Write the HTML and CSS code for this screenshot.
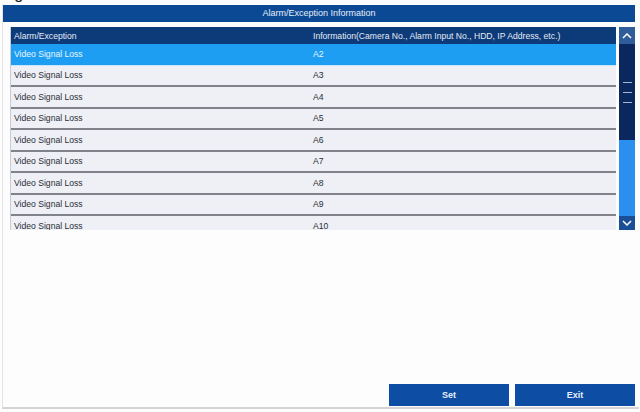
FILE: index.html
```html
<!DOCTYPE html>
<html>
<head>
<meta charset="utf-8">
<link rel="stylesheet" href="styles.css">
</head>
<body>
<div class="caption"><span>Figure</span></div>
<div class="dialog">
  <div class="titlebar">Alarm/Exception Information</div>
  <div class="table">
    <div class="list">
      <div class="row head"><div class="c1">Alarm/Exception</div><div class="c2">Information(Camera No., Alarm Input No., HDD, IP Address, etc.)</div></div>
      <div class="body">
        <div class="row sel"><div class="c1">Video Signal Loss</div><div class="c2">A2</div></div>
        <div class="row"><div class="c1">Video Signal Loss</div><div class="c2">A3</div></div>
        <div class="row"><div class="c1">Video Signal Loss</div><div class="c2">A4</div></div>
        <div class="row"><div class="c1">Video Signal Loss</div><div class="c2">A5</div></div>
        <div class="row"><div class="c1">Video Signal Loss</div><div class="c2">A6</div></div>
        <div class="row"><div class="c1">Video Signal Loss</div><div class="c2">A7</div></div>
        <div class="row"><div class="c1">Video Signal Loss</div><div class="c2">A8</div></div>
        <div class="row"><div class="c1">Video Signal Loss</div><div class="c2">A9</div></div>
        <div class="row"><div class="c1">Video Signal Loss</div><div class="c2">A10</div></div>
      </div>
    </div>
    <div class="scroll">
      <div class="sbtn up"><svg width="10" height="6" viewBox="0 0 10 6"><path d="M1 5 L5 1 L9 5" fill="none" stroke="#fff" stroke-width="1.5"/></svg></div>
      <div class="thumb"><span></span><span></span><span></span></div>
      <div class="track"></div>
      <div class="sbtn down"><svg width="10" height="6" viewBox="0 0 10 6"><path d="M1 1 L5 5 L9 1" fill="none" stroke="#fff" stroke-width="1.5"/></svg></div>
    </div>
  </div>
  <div class="actions">
    <div class="btn">Set</div>
    <div class="btn">Exit</div>
  </div>
</div>
</body>
</html>
```
FILE: styles.css
```css
html, body {
  margin: 0;
  padding: 0;
  background: #fdfdfd;
  font-family: "Liberation Sans", Arial, sans-serif;
  width: 640px;
  height: 412px;
  overflow: hidden;
}
.caption {
  height: 4px;
  overflow: hidden;
  padding-left: 1px;
  color: #222;
}
.caption span {
  display: block;
  font-size: 16px;
  line-height: 16px;
  margin-top: -14px;
}
.dialog {
  margin-left: 2px;
  width: 637px;
  height: 405px;
  border-left: 1px solid #e2e2e2;
  border-bottom: 2px solid #d4d4d4;
  display: flex;
  flex-direction: column;
  box-sizing: border-box;
  padding-top: 1px;
}
.titlebar {
  height: 17px;
  background: #0c4995;
  color: #e8eef8;
  font-size: 9px;
  line-height: 17px;
  text-align: center;
  margin-right: 4px;
}
.table {
  display: flex;
  gap: 3px;
  margin: 5px 3px 0 7px;
  height: 203px;
}
.list {
  width: 605px;
  display: flex;
  flex-direction: column;
  border-left: 1px solid #c9ccd3;
}
.row {
  display: flex;
  height: 21.5px;
  box-sizing: border-box;
  align-items: center;
  font-size: 8.6px;
  color: #2a2d35;
  background: #eef0f6;
  border-bottom: 2px solid #80838a;
  flex-shrink: 0;
}
.row.head {
  height: 17px;
  background: #0d3a78;
  color: #e4ebf6;
  border-bottom: none;
}
.row.sel {
  background: #1d9ef2;
  color: #e9f6ff;
  border-bottom: 1px solid #c8e6fb;
}
.c1 {
  width: 302px;
  padding-left: 3px;
  box-sizing: border-box;
}
.c2 {
  padding-left: 0;
}
.body {
  height: 186px;
  overflow: hidden;
  display: flex;
  flex-direction: column;
}
.scroll {
  width: 16px;
  display: flex;
  flex-direction: column;
}
.sbtn {
  display: flex;
  align-items: center;
  justify-content: center;
  flex-shrink: 0;
}
.sbtn.up {
  height: 17px;
  background: #2f5d9a;
}
.sbtn.down {
  height: 14px;
  background: #1a4f98;
}
.thumb {
  height: 96px;
  background: #0a275e;
  display: flex;
  flex-direction: column;
  justify-content: center;
  align-items: center;
  gap: 9px;
}
.thumb span {
  display: block;
  width: 9px;
  height: 1px;
  background: #a8b6d0;
}
.track {
  flex: 1;
  background: #2b8ff0;
}
.actions {
  margin-top: auto;
  margin-bottom: 0;
  display: flex;
  justify-content: flex-end;
  gap: 6px;
  padding-right: 4px;
  height: 23px;
}
.btn {
  width: 120px;
  height: 22px;
  background: #0d4ea4;
  color: #e6eefa;
  font-size: 9px;
  font-weight: bold;
  line-height: 22px;
  text-align: center;
}
```
